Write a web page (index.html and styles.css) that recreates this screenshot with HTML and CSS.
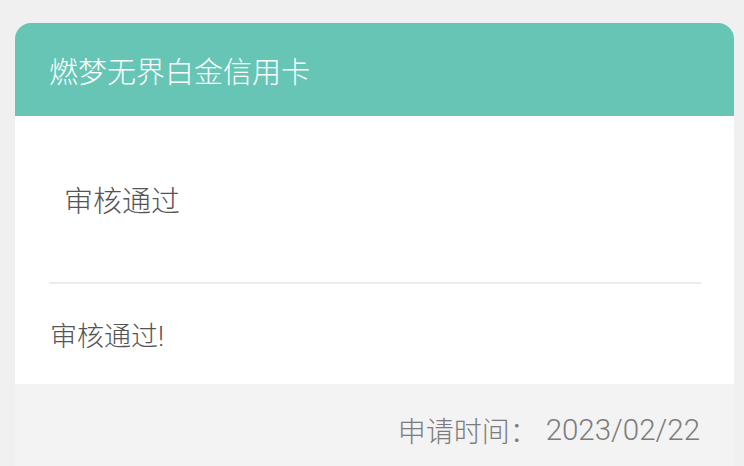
FILE: index.html
```html
<!DOCTYPE html>
<html lang="zh-CN">
<head>
<meta charset="utf-8">
<link rel="stylesheet" href="styles.css">
</head>
<body>
<div class="card">
  <div class="card-header">燃梦无界白金信用卡</div>
  <div class="card-body">
    <div class="status">审核通过</div>
    <div class="divider"></div>
    <div class="message">审核通过!</div>
  </div>
  <div class="card-footer">申请时间：<span class="date">2023/02/22</span></div>
</div>
</body>
</html>
```

FILE: styles.css
```css
html, body {
  margin: 0;
  padding: 0;
  background: #f0f0f0;
  font-family: Roboto, "Noto Sans CJK SC", sans-serif;
  font-weight: 300;
}
body {
  padding: 23px 10px 0 15px;
}
.card {
  width: 719px;
  border-radius: 16px 16px 0 0;
  overflow: hidden;
}
.card-header {
  height: 93px;
  background: #66c5b5;
  color: #ffffff;
  font-size: 29px;
  display: flex;
  align-items: center;
  padding-left: 34px;
}
.card-body {
  background: #ffffff;
}
.status {
  height: 166px;
  display: flex;
  align-items: center;
  padding-left: 49px;
  font-size: 29px;
  color: #555555;
}
.divider {
  height: 2px;
  background: #ebebeb;
  margin: 0 33px 0 34px;
}
.message {
  height: 100px;
  display: flex;
  align-items: center;
  padding-left: 35px;
  font-size: 27px;
  color: #555555;
}
.card-footer {
  height: 92px;
  background: #f3f3f3;
  display: flex;
  align-items: center;
  justify-content: flex-end;
  padding-right: 34px;
  font-size: 28px;
  color: #7c7c7c;
}
.date {
  font-size: 29.5px;
  margin-left: 8px;
}
```
